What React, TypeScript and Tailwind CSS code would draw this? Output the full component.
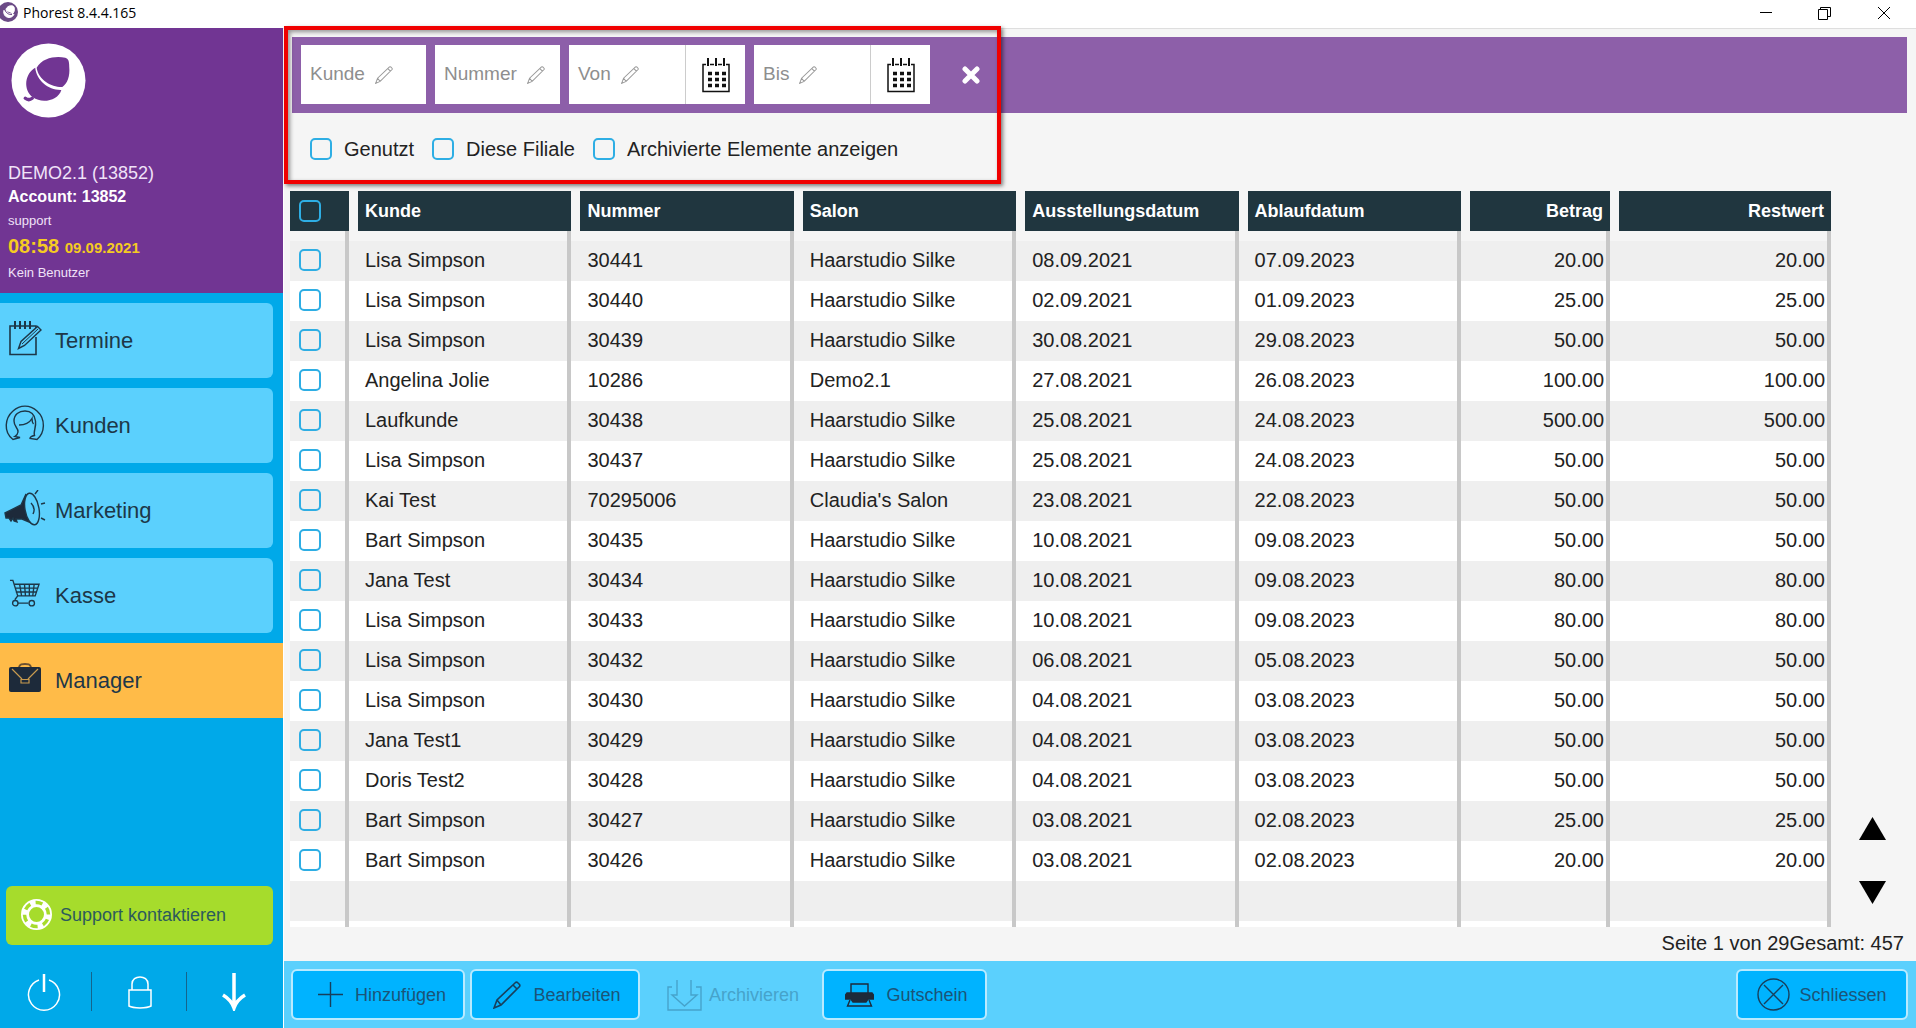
import React from "react";

const navItems = [
  { label: "Termine", Icon: AppointmentIcon },
  { label: "Kunden", Icon: ClientIcon },
  { label: "Marketing", Icon: MegaphoneIcon },
  { label: "Kasse", Icon: CartIcon },
  { label: "Manager", Icon: BriefcaseIcon, active: true },
];

const columns = [
  { name: "Kunde" },
  { name: "Nummer" },
  { name: "Salon" },
  { name: "Ausstellungsdatum" },
  { name: "Ablaufdatum" },
  { name: "Betrag", right: true },
  { name: "Restwert", right: true },
];

const vouchers = [
  ["Lisa Simpson", "30441", "Haarstudio Silke", "08.09.2021", "07.09.2023", "20.00", "20.00"],
  ["Lisa Simpson", "30440", "Haarstudio Silke", "02.09.2021", "01.09.2023", "25.00", "25.00"],
  ["Lisa Simpson", "30439", "Haarstudio Silke", "30.08.2021", "29.08.2023", "50.00", "50.00"],
  ["Angelina Jolie", "10286", "Demo2.1", "27.08.2021", "26.08.2023", "100.00", "100.00"],
  ["Laufkunde", "30438", "Haarstudio Silke", "25.08.2021", "24.08.2023", "500.00", "500.00"],
  ["Lisa Simpson", "30437", "Haarstudio Silke", "25.08.2021", "24.08.2023", "50.00", "50.00"],
  ["Kai Test", "70295006", "Claudia's Salon", "23.08.2021", "22.08.2023", "50.00", "50.00"],
  ["Bart Simpson", "30435", "Haarstudio Silke", "10.08.2021", "09.08.2023", "50.00", "50.00"],
  ["Jana Test", "30434", "Haarstudio Silke", "10.08.2021", "09.08.2023", "80.00", "80.00"],
  ["Lisa Simpson", "30433", "Haarstudio Silke", "10.08.2021", "09.08.2023", "80.00", "80.00"],
  ["Lisa Simpson", "30432", "Haarstudio Silke", "06.08.2021", "05.08.2023", "50.00", "50.00"],
  ["Lisa Simpson", "30430", "Haarstudio Silke", "04.08.2021", "03.08.2023", "50.00", "50.00"],
  ["Jana Test1", "30429", "Haarstudio Silke", "04.08.2021", "03.08.2023", "50.00", "50.00"],
  ["Doris Test2", "30428", "Haarstudio Silke", "04.08.2021", "03.08.2023", "50.00", "50.00"],
  ["Bart Simpson", "30427", "Haarstudio Silke", "03.08.2021", "02.08.2023", "25.00", "25.00"],
  ["Bart Simpson", "30426", "Haarstudio Silke", "03.08.2021", "02.08.2023", "20.00", "20.00"],
];

function AppointmentIcon() {
  return (
    <svg width="34" height="36" viewBox="0 0 34 36" fill="none" stroke="#1d3748" strokeWidth="1.6">
      <path d="M26 6H28V9M4 6H2V34.5H28V17M4 6H26" />
      <path d="M7 1V9M12 1V9M17 1V9M22 1V9" strokeWidth="2" />
      <path d="M10.5 28.5L13 21.5L29.500 6.500L33 10L16.500 25.500Z" fill="#5bd0fd" strokeWidth="1.4" />
      <path d="M14 24L30 9" strokeWidth="1" />
    </svg>
  );
}

function ClientIcon() {
  return (
    <svg width="40" height="36" viewBox="0 0 40 36" fill="none" stroke="#1d3748" strokeWidth="1.4">
      <path d="M8 34.5C-2 27 0 13 8 6C15 -0.5 25 -0.5 32 6C41 14 40 28 32 34.5L25 33.500C25 31.500 27 31 29.500 30.500C28 27 31.500 22 30.500 16C29.500 9 26 6 20 6C14 6 9 9.500 9 16C9 22 13.500 23 13 27C12.500 30 11 31 10 31.500L15 32.500L8 34.5Z" />
      <path d="M14 20C20 20 25 17 27 13.500C27 16 27.500 18 28.500 19" />
    </svg>
  );
}

function MegaphoneIcon() {
  return (
    <svg width="42" height="36" viewBox="0 0 42 36" fill="none" stroke="#1d3748" strokeWidth="1.4">
      <path d="M1 23L17 15L22 4C19 13 21 25 30 34L18 29L12 29L13 32L10 31L9 28L7 31L5 28H2Z" fill="#1d2a3a" />
      <ellipse cx="28" cy="19" rx="7" ry="16" transform="rotate(-10 28 19)" fill="#5bd0fd" />
      <path d="M27 13C30 16 31 20 29 24M31 4L34 0M37 14L41 13M37 28L41 30" />
    </svg>
  );
}

function CartIcon() {
  return (
    <svg width="31" height="28" viewBox="0 0 32 28" fill="none" stroke="#1d3748" strokeWidth="1.4">
      <path d="M1 1H4L9 17L6 21M9 24.500H20M5 5H31L27 17H9M6 9H30M7 13H28.500M11 5L13 17M16 5L17 17M21 5L21 17M26 5L24.500 17" />
      <circle cx="6.5" cy="24.5" r="2.8" />
      <circle cx="23.5" cy="24.5" r="2.8" />
    </svg>
  );
}

function BriefcaseIcon() {
  return (
    <svg width="32" height="30" viewBox="0 0 32 30" fill="none">
      <path d="M10 4C11 1 13 1 16 1C19 1 21 1 22 4" stroke="#6b5132" strokeWidth="2" />
      <rect y="4" width="32" height="25" rx="2" fill="#1d2a3a" />
      <path d="M3 6L13 16M29 6L19 16M12 16.500H20V20H12Z" stroke="#c79a4e" strokeWidth="1.2" />
    </svg>
  );
}

function AcornLogo({ className }: { className: string }) {
  return (
    <svg className={className} viewBox="0 0 76 76">
      <circle cx="38" cy="38" r="37.5" fill="#fff" />
      <path d="M26 25C32 15 45 13 55 15C58 16 59 18 59 24C60 34 57 41 52 44.500C42 45 28 38 26 25Z" fill="#713593" />
      <path d="M24.500 25C26 38 38 48 51 47.500C48 58 32 62 22 55C12 47 14 31 24.500 25Z" fill="#713593" />
      <path d="M14.500 56C17 58 19 58 21.500 56" stroke="#713593" strokeWidth="3.5" strokeLinecap="round" fill="none" />
    </svg>
  );
}

function PencilIcon({ className }: { className: string }) {
  return (
    <svg className={className} viewBox="0 0 28 28" fill="none" stroke="currentColor" strokeWidth="1.6">
      <path d="M1 27L4 19L22.500 1.500Q23.500 0.800 24.500 1.500L26.500 3.500Q27.200 4.500 26.500 5.500L8 24ZM20 4L24 8M4 19L8 24" />
    </svg>
  );
}

function CalendarIcon() {
  return (
    <svg width="28" height="36" viewBox="0 0 28 36" fill="none" stroke="#111">
      <path d="M4 7.5H1V34.500H27V7.500H24M8 7.500H12M16 7.500H20" strokeWidth="1.5" />
      <path d="M6 1V9M14 1V9M22 1V9" strokeWidth="2" />
      <path d="M6 16.500H24M6 22.500H24M6 28.500H24" strokeWidth="3.5" strokeDasharray="4 3" />
    </svg>
  );
}

const checkboxClass =
  "block h-[22px] w-[22px] shrink-0 appearance-none rounded-[5px] border-2 border-[#2eaee4] bg-transparent checked:bg-[#2eaee4]";

function FilterField({ label, calendar }: { label: string; calendar?: boolean }) {
  return (
    <div className={`flex h-[59px] bg-white ${calendar ? "w-[176px]" : "w-[125px]"}`}>
      <label className="relative flex min-w-0 flex-1 items-center gap-2.5 pl-[9px] text-[19px] text-[#8e8e8e]">
        <span>{label}</span>
        <PencilIcon className="h-[18px] w-[18px] text-[#9a9a9a]" />
        <input type="text" className="absolute inset-0 w-full bg-transparent px-[9px] text-black" />
      </label>
      {calendar && (
        <button aria-label={`${label} Kalender`} className="flex w-[60px] items-center justify-center border-l border-[#ccc]">
          <CalendarIcon />
        </button>
      )}
    </div>
  );
}

function ActionButton({ label, className, children }: { label: string; className: string; children: React.ReactNode }) {
  return (
    <button
      className={`flex h-[51px] items-center justify-center rounded-md border-2 border-[#b9eaff] bg-[#00b3ff] text-lg text-[#1b5478] ${className}`}
    >
      {children}
      <span>{label}</span>
    </button>
  );
}

function Sidebar() {
  return (
    <aside className="flex w-[283px] shrink-0 flex-col bg-[#00a9e9]">
      <div className="h-[265px] bg-[#713593] px-2 pt-[15px] text-[#f0e2f8]">
        <AcornLogo className="ml-[3px] h-[75px] w-[75px]" />
        <div className="mt-[43px] text-lg leading-6">DEMO2.1 (13852)</div>
        <div className="text-base leading-6 font-bold text-white">Account: 13852</div>
        <div className="text-[13px] leading-6">support</div>
        <div className="text-xl leading-[26px] font-bold text-[#f5cb22]">
          08:58 <span className="text-[15px]">09.09.2021</span>
        </div>
        <div className="text-[13px] leading-6">Kein Benutzer</div>
      </div>

      <nav className="flex flex-col gap-2.5 pt-2.5">
        {navItems.map(({ label, Icon, active }) => (
          <a
            key={label}
            href="#"
            className={`flex h-[75px] items-center text-[22px] text-[#1d3748] ${active ? "bg-[#ffbb48]" : "mr-2.5 rounded-r-md bg-[#5bd0fd]"}`}
          >
            <span className="flex w-[55px] justify-center pr-1.5 pb-[5px]">
              <Icon />
            </span>
            {label}
          </a>
        ))}
      </nav>

      <button className="mx-1.5 mt-auto mr-2.5 flex h-[59px] items-center gap-2 rounded-md bg-[#a6dc2c] pb-0.5 pl-[15px] text-lg text-[#2c5a5c]">
        <svg width="31" height="31" viewBox="0 0 31 31" fill="none">
          <circle cx="15.5" cy="15.5" r="11.5" stroke="#fff" strokeWidth="8" />
          <circle cx="15.5" cy="15.5" r="12" stroke="#a6dc2c" strokeWidth="3.500" strokeDasharray="7 5.566" strokeDashoffset="-5" />
        </svg>
        Support kontaktieren
      </button>

      <div className="mt-[27px] mb-[17px] flex h-[39px] items-center text-white">
        <button aria-label="Beenden" className="flex w-[91px] justify-center pr-1">
          <svg width="34" height="38" viewBox="0 0 34 38" fill="none" stroke="currentColor" strokeWidth="1.5">
            <path d="M12 7A15.500 15.500 0 1 0 22 7" />
            <path d="M17 1V19" strokeWidth="2.5" />
          </svg>
        </button>
        <span className="h-full w-px bg-[#14648c]" />
        <button aria-label="Sperren" className="flex w-[94px] justify-center pl-0.5">
          <svg width="26" height="34" viewBox="0 0 26 34" fill="none" stroke="currentColor" strokeWidth="1.5">
            <path d="M2 15H24V31C20 33.500 6 33.500 2 31ZM5 15V9C5 -0.500 21 -0.500 21 9V15" />
          </svg>
        </button>
        <span className="h-full w-px bg-[#14648c]" />
        <button aria-label="Minimieren" className="flex flex-1 justify-center pr-0.5">
          <svg width="26" height="38" viewBox="0 0 26 38" fill="none" stroke="currentColor" strokeWidth="3.500">
            <path d="M13 0V35M2 22C7 25 11 29 13 35C15 29 19 25 24 22" />
          </svg>
        </button>
      </div>
    </aside>
  );
}

function FillerRow({ className }: { className: string }) {
  return (
    <tr className={className}>
      {Array.from({ length: 8 }, (_, i) => (
        <td key={i} className="border-r-4 border-[#c8c8c8] p-0" />
      ))}
    </tr>
  );
}

function VoucherTable() {
  return (
    <table className="w-full table-fixed border-separate border-spacing-0 text-[20px] text-[#222]">
      <colgroup>
        <col className="w-[59px]" />
        <col />
        <col />
        <col />
        <col />
        <col />
        <col className="w-[149px]" />
        <col className="w-[221px]" />
      </colgroup>
      <thead>
        <tr className="text-lg text-white">
          <th className="p-0">
            <div className="flex h-10 items-center bg-[#20363f] pl-[9px]">
              <input type="checkbox" aria-label="Alle auswählen" className={checkboxClass} />
            </div>
          </th>
          {columns.map(({ name, right }) => (
            <th key={name} className={`p-0 font-bold ${right ? "text-right" : "text-left"}`}>
              <div className="ml-[9px] h-10 bg-[#20363f] px-[7px] leading-10">{name}</div>
            </th>
          ))}
        </tr>
      </thead>
      <tbody>
        <FillerRow className="h-2.5" />
        {vouchers.map((row, i) => (
          <tr key={row[1]} className={`h-10 ${i % 2 === 0 ? "bg-[#efefef]" : "bg-white"}`}>
            <td className="border-r-4 border-[#c8c8c8] p-0 pb-[3px] pl-[9px]">
              <input type="checkbox" aria-label={`Gutschein ${row[1]}`} className={checkboxClass} />
            </td>
            {row.map((cell, j) => (
              <td
                key={j}
                className={`border-r-4 border-[#c8c8c8] pt-0 pr-0.5 pb-[3px] pl-4 leading-6 ${columns[j].right ? "text-right" : ""}`}
              >
                {cell}
              </td>
            ))}
          </tr>
        ))}
        <FillerRow className="h-10 bg-[#efefef]" />
        <FillerRow className="h-1.5 bg-white" />
      </tbody>
    </table>
  );
}

export default function App() {
  return (
    <div className="flex min-h-screen flex-col bg-white font-['Liberation_Sans',Arial,sans-serif]">
      <header className="flex h-7 items-center bg-white text-black">
        <svg width="18" height="20" viewBox="2 0 18 20" className="-mt-1">
          <circle cx="10" cy="10" r="10" fill="#6b4a86" />
          <path d="M6 8C4 16 14 18 16 12M8 7C10 3 15 3 16 5C17 8 16 11 14 12C11 12 8 10 8 7Z" fill="#fff" stroke="#fff" />
          <path d="M7 8C8 11 11 13 14 12.500" stroke="#6b4a86" fill="none" />
        </svg>
        <h1 className="ml-[5px] pb-0.5 font-['Open_Sans',sans-serif] text-sm">Phorest 8.4.4.165</h1>
        <div className="ml-auto flex pb-0.5">
          <button aria-label="Fenster minimieren" className="flex w-[59px] items-center justify-center">
            <svg width="12" height="12" stroke="#000"><path d="M0 5.5H12" /></svg>
          </button>
          <button aria-label="Fenster verkleinern" className="flex w-[59px] items-center justify-center">
            <svg width="13" height="13" fill="none" stroke="#000"><path d="M0.5 2.5H9.5V12.5H0.5ZM2.5 2.5V0.5H12.5V9.5H9.5" /></svg>
          </button>
          <button aria-label="Fenster schließen" className="mr-[3px] flex w-[59px] items-center justify-center">
            <svg width="12" height="12" stroke="#000"><path d="M0 0L12 12M12 0L0 12" /></svg>
          </button>
        </div>
      </header>

      <div className="flex flex-1">
        <Sidebar />
        <div className="relative flex min-w-0 flex-1 flex-col border-t border-l border-[#dedede] border-l-white bg-[#f5f5f5]">
          <section className="mt-2 mr-[9px] ml-2 flex h-[76px] items-center gap-[9px] bg-[#8d5fa9] pb-px pl-[9px]">
            <FilterField label="Kunde" />
            <FilterField label="Nummer" />
            <FilterField label="Von" calendar />
            <FilterField label="Bis" calendar />
            <button aria-label="Filter löschen" className="ml-[23px] text-white">
              <svg width="18" height="18" viewBox="0 0 18 18" stroke="currentColor" strokeWidth="5" strokeLinecap="round">
                <path d="M3 3L15 15M15 3L3 15" />
              </svg>
            </button>
          </section>

          <section className="flex h-[78px] items-center gap-[18px] pb-1.5 pl-[26px] text-[20px] text-[#222]">
            {["Genutzt", "Diese Filiale", "Archivierte Elemente anzeigen"].map((name) => (
              <label key={name} className="flex items-center gap-3">
                <input type="checkbox" className={checkboxClass} />
                {name}
              </label>
            ))}
          </section>

          <main className="flex flex-1 pl-1.5">
            <div className="min-w-0 flex-1">
              <VoucherTable />
            </div>
            <div className="flex w-[85px] flex-col items-center justify-end gap-[41px] pr-[3px] pb-[23px]">
              <button aria-label="Vorherige Seite">
                <svg width="27" height="23"><path d="M13.5 0L27 23H0Z" /></svg>
              </button>
              <button aria-label="Nächste Seite">
                <svg width="27" height="23"><path d="M0 0H27L13.5 23Z" /></svg>
              </button>
            </div>
          </main>

          <p className="flex h-[34px] items-center justify-end pr-3 pb-0.5 text-[20px] text-[#222]">
            <span>Seite 1 von 29</span>
            <span>Gesamt: 457</span>
          </p>

          <footer className="flex h-[67px] items-center gap-[5px] bg-[#5bd0fd] pr-2 pl-[7px]">
            <ActionButton label="Hinzufügen" className="w-[174px] gap-3 pl-2">
              <svg width="25" height="25" stroke="#173f5c" strokeWidth="1.4"><path d="M12.5 0V25M0 12.5H25" /></svg>
            </ActionButton>
            <ActionButton label="Bearbeiten" className="w-[170px] gap-3 pl-1">
              <PencilIcon className="h-7 w-7 text-[#173f5c]" />
            </ActionButton>
            <button disabled className="flex h-[51px] w-[172px] items-center justify-center gap-[7px] pl-1 text-lg text-[#46a3cb]">
              <svg width="35" height="32" viewBox="0 0 35 32" fill="none" stroke="currentColor" strokeWidth="1.4">
                <path d="M5 8H1V31H34V8H29M10 1V16H5L17.5 27L30 16H24V1" />
              </svg>
              Archivieren
            </button>
            <ActionButton label="Gutschein" className="w-[165px] gap-3 pl-1">
              <svg width="29" height="24" viewBox="0 0 29 24" fill="none" stroke="#1d2a3a" strokeWidth="1.4">
                <path d="M6 10V1H23V10M5 17L2.5 23H26.5L24 17" />
                <path d="M2 10H27L28.500 12V16H23L21 19H8L6 16H0.500V12Z" fill="#1d2a3a" />
              </svg>
            </ActionButton>
            <div className="ml-auto">
              <ActionButton label="Schliessen" className="w-[172px] gap-[9px]">
                <svg width="33" height="33" viewBox="0 0 33 33" fill="none" stroke="#173f5c" strokeWidth="1.4">
                  <circle cx="16.5" cy="16.5" r="15.5" />
                  <path d="M7 7L26 26M26 7L7 26" />
                </svg>
              </ActionButton>
            </div>
          </footer>

          {/* highlight around the filter area */}
          <div className="pointer-events-none absolute -top-[3px] left-0 h-[158px] w-[717px] border-4 border-[#f00000] shadow-[2px_2px_4px_rgba(0,0,0,0.5),inset_2px_2px_4px_rgba(0,0,0,0.4)]" />
        </div>
      </div>
    </div>
  );
}
